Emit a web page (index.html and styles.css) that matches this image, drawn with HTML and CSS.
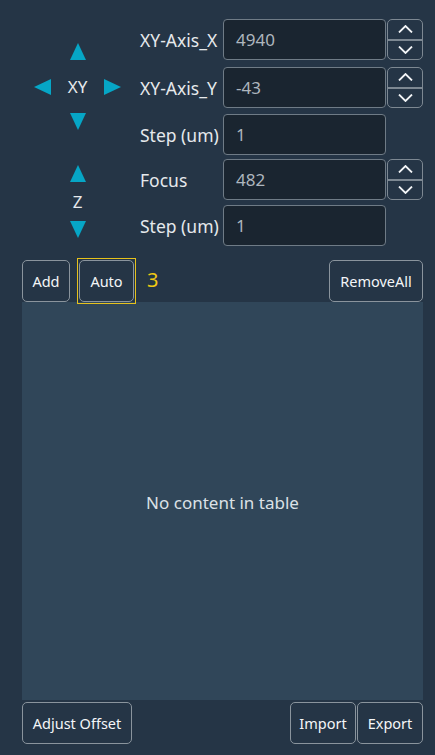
FILE: index.html
```html
<!DOCTYPE html>
<html>
<head>
<meta charset="utf-8">
<link rel="stylesheet" href="styles.css">
</head>
<body>
<div class="panel">
  <div class="controls">
    <div class="pad pad-xy">
      <span class="tri up c2 r1"></span>
      <span class="tri left c1 r2"></span>
      <span class="pad-label c2 r2">XY</span>
      <span class="tri right c3 r2"></span>
      <span class="tri down c2 r3"></span>
    </div>
    <div class="pad pad-z">
      <span class="tri up"></span>
      <span class="pad-label">Z</span>
      <span class="tri down"></span>
    </div>

    <label class="lbl row1">XY-Axis_X</label>
    <div class="field row1">4940</div>
    <div class="spin row1">
      <span class="chev chev-up"><svg width="15" height="8" viewBox="0 0 15 8"><polyline points="1,7.5 7.5,1 14,7.5"/></svg></span>
      <span class="chev chev-down"><svg width="15" height="8" viewBox="0 0 15 8"><polyline points="1,0.5 7.5,7 14,0.5"/></svg></span>
    </div>

    <label class="lbl row2">XY-Axis_Y</label>
    <div class="field row2">-43</div>
    <div class="spin row2">
      <span class="chev chev-up"><svg width="15" height="8" viewBox="0 0 15 8"><polyline points="1,7.5 7.5,1 14,7.5"/></svg></span>
      <span class="chev chev-down"><svg width="15" height="8" viewBox="0 0 15 8"><polyline points="1,0.5 7.5,7 14,0.5"/></svg></span>
    </div>

    <label class="lbl row3">Step (um)</label>
    <div class="field row3">1</div>

    <label class="lbl row4">Focus</label>
    <div class="field row4">482</div>
    <div class="spin row4">
      <span class="chev chev-up"><svg width="15" height="8" viewBox="0 0 15 8"><polyline points="1,7.5 7.5,1 14,7.5"/></svg></span>
      <span class="chev chev-down"><svg width="15" height="8" viewBox="0 0 15 8"><polyline points="1,0.5 7.5,7 14,0.5"/></svg></span>
    </div>

    <label class="lbl row5">Step (um)</label>
    <div class="field row5">1</div>
  </div>

  <div class="toolbar">
    <button class="btn btn-add">Add</button>
    <span class="focus-ring"><button class="btn btn-auto">Auto</button></span>
    <span class="count">3</span>
    <span class="spacer"></span>
    <button class="btn btn-remove">RemoveAll</button>
  </div>

  <div class="table">
    <span class="empty">No content in table</span>
  </div>

  <div class="footer">
    <button class="btn btn-offset">Adjust Offset</button>
    <span class="spacer"></span>
    <button class="btn btn-import">Import</button>
    <button class="btn btn-export">Export</button>
  </div>
</div>
</body>
</html>
```

FILE: styles.css
```css
html, body {
  margin: 0;
  padding: 0;
  background: #253546;
  font-family: "Noto Sans", "Open Sans", sans-serif;
  color: #e6e9ec;
}

.panel {
  width: 435px;
  height: 755px;
  box-sizing: border-box;
  padding: 19px 12px 0 22px;
  display: flex;
  flex-direction: column;
}

.controls {
  display: grid;
  grid-template-columns: 118px 83px 163px 37px;
  grid-template-rows: 48px 47px 45px 46px 41px;
  height: 227px;
}

.row1 { grid-row: 1; }
.row2 { grid-row: 2; }
.row3 { grid-row: 3; }
.row4 { grid-row: 4; }
.row5 { grid-row: 5; }

.pad {
  grid-column: 1;
  display: grid;
  justify-self: start;
}

.pad-xy {
  grid-row: 1 / 4;
  align-self: start;
  margin-top: 15px;
  margin-left: 3px;
  grid-template-columns: 35px 35px 35px;
  grid-template-rows: 35px 35px 35px;
}

.pad-z {
  grid-row: 4 / 6;
  align-self: start;
  margin-left: 38px;
  grid-template-columns: 35px;
  grid-template-rows: 28px 28px 28px;
}

.c1 { grid-column: 1; }
.c2 { grid-column: 2; }
.c3 { grid-column: 3; }
.r1 { grid-row: 1; }
.r2 { grid-row: 2; }
.r3 { grid-row: 3; }

.pad > * {
  justify-self: center;
  align-self: center;
}

.pad-label {
  font-size: 17px;
  color: #e6e9ec;
  line-height: 1;
}

.tri {
  width: 0;
  height: 0;
  border-style: solid;
  border-color: transparent;
}

.tri.up {
  border-width: 0 8px 17px 8px;
  border-bottom-color: #06a6c6;
}

.tri.down {
  border-width: 17px 8px 0 8px;
  border-top-color: #06a6c6;
}

.tri.left {
  border-width: 8px 17px 8px 0;
  border-right-color: #06a6c6;
}

.tri.right {
  border-width: 8px 0 8px 17px;
  border-left-color: #06a6c6;
}

.lbl {
  grid-column: 2;
  align-self: start;
  height: 41px;
  display: flex;
  align-items: center;
  font-size: 17.5px;
  color: #e6e9ec;
  white-space: nowrap;
}

.field {
  grid-column: 3;
  align-self: start;
  height: 41px;
  box-sizing: border-box;
  background: #1a2530;
  border: 1px solid #6f7b86;
  border-radius: 4px;
  padding-left: 12px;
  display: flex;
  align-items: center;
  font-size: 17px;
  color: #aeb6be;
}

.spin {
  grid-column: 4;
  align-self: start;
  height: 41px;
  margin-left: 1px;
  box-sizing: border-box;
  border: 1px solid #7d8892;
  border-radius: 5px;
  display: flex;
  flex-direction: column;
}

.chev {
  flex: 1;
  display: flex;
  align-items: center;
  justify-content: center;
}

.chev-up {
  border-bottom: 2px solid #7d8892;
}

.chev svg {
  fill: none;
  stroke: #f2f4f6;
  stroke-width: 1.8;
}

.toolbar {
  display: flex;
  align-items: flex-start;
  margin-top: 14px;
  height: 42px;
}

.btn {
  box-sizing: border-box;
  height: 42px;
  background: #253546;
  border: 1px solid #8a949d;
  border-radius: 5px;
  color: #f4f6f8;
  font-family: "Noto Sans", "Open Sans", sans-serif;
  font-size: 14.5px;
  padding: 0;
}

.btn-add { width: 48px; }

.focus-ring {
  position: relative;
  z-index: 1;
  display: flex;
  margin-left: 7px;
  margin-top: -2px;
  border: 1px solid #e6c21c;
  padding: 1px;
}

.btn-auto { width: 55px; }

.count {
  align-self: center;
  margin-left: 11px;
  color: #f0c814;
  font-size: 20px;
  line-height: 1;
  margin-top: -3px;
}

.spacer { flex: 1; }

.btn-remove { width: 94px; }

.table {
  height: 398px;
  background: #304659;
  display: flex;
  align-items: center;
  justify-content: center;
}

.empty {
  font-size: 17px;
  color: #dbe1e6;
  margin-top: 2px;
}

.footer {
  display: flex;
  margin-top: 2px;
}

.btn-offset { width: 110px; }
.btn-import { width: 66px; }
.btn-export { width: 66px; margin-left: 1px; }
```
